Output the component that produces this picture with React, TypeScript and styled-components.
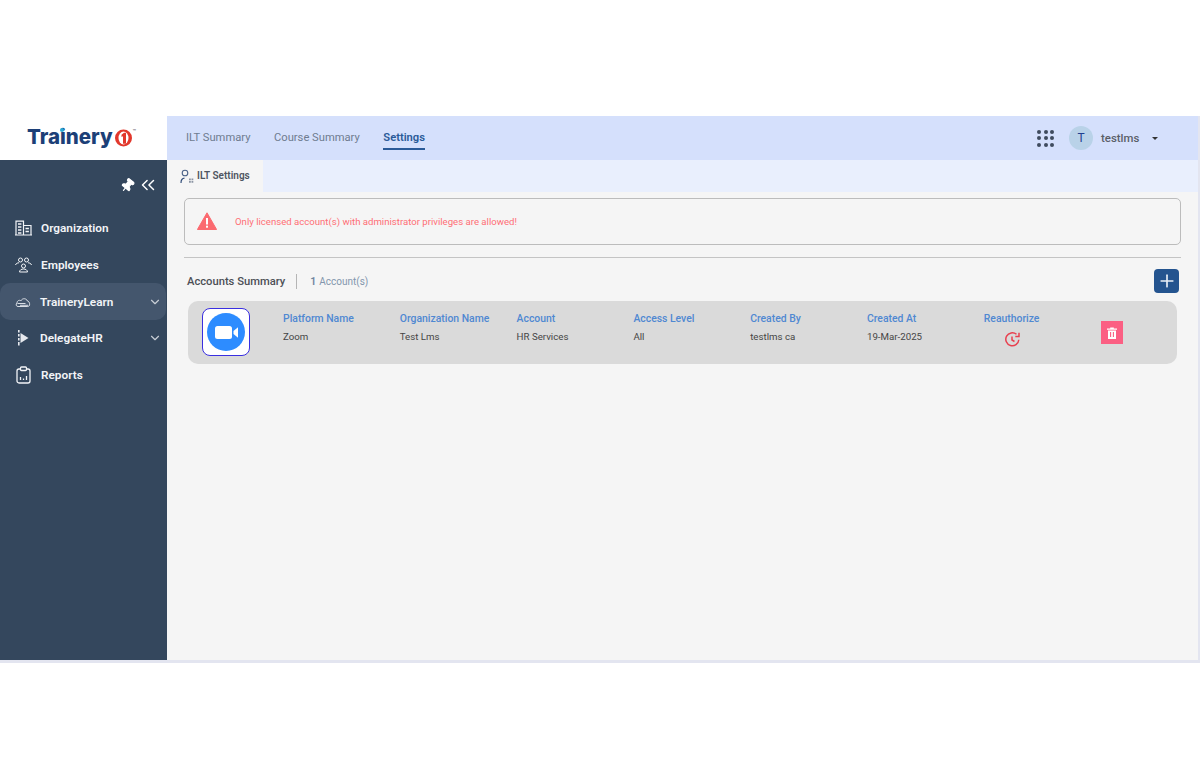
import React from "react";
import styled, { createGlobalStyle } from "styled-components";
import { ChevronDown, ChevronsLeft, Plus, Pin } from "lucide-react";

const GlobalStyle = createGlobalStyle`
  html, body {
    margin: 0;
    padding: 0;
    background: #fff;
    font-family: Roboto, "Liberation Sans", sans-serif;
  }
  * { box-sizing: border-box; }
`;

const Page = styled.div`
  width: 1200px;
  height: 780px;
  padding-top: 116px;
  overflow: hidden;
`;

const Frame = styled.div`
  width: 1200px;
  height: 547px;
  display: grid;
  grid-template-columns: 167px 1fr;
  border-bottom: 3px solid #e3e5f0;
  border-right: 2px solid #e3e5f0;
`;

const Side = styled.aside`
  display: flex;
  flex-direction: column;
  min-height: 0;
`;

const LogoBar = styled.div`
  height: 44px;
  background: #fff;
  display: flex;
  align-items: center;
  padding: 0 0 2px 27px;
`;

const LogoText = styled.span`
  position: relative;
  font-family: Inter, sans-serif;
  font-weight: 800;
  font-size: 20.5px;
  color: #1c3f77;
  line-height: 1;
`;

const LogoDot = styled.span`
  position: absolute;
  left: 33px;
  top: 1px;
  width: 4px;
  height: 4px;
  border-radius: 50%;
  background: #27a9d6;
`;

const LogoMark = styled.sup`
  font-size: 6px;
  line-height: 1;
  color: #555;
  margin: -12px 0 0 0;
`;

const Nav = styled.nav`
  flex: 1;
  background: #34475d;
  display: flex;
  flex-direction: column;
`;

const NavTools = styled.div`
  height: 50px;
  display: flex;
  align-items: center;
  justify-content: flex-end;
  gap: 2px;
  padding: 0 8px 0 0;
  color: #fff;
`;

const NavItem = styled.div<{ $active?: boolean }>`
  height: 36.7px;
  display: flex;
  align-items: center;
  padding-left: 15px;
  gap: 9px;
  color: #f2f4f7;
  font-size: 11.8px;
  font-weight: 600;
  background: ${(p) => (p.$active ? "#44566d" : "transparent")};
  border-radius: 10px;
  width: 166px;
`;

const NavLabel = styled.span`
  flex: 1;
`;

const NavArrow = styled.span`
  display: flex;
  margin-right: 4px;
  color: #c8ced6;
`;

const Main = styled.main`
  display: flex;
  flex-direction: column;
  background: #f5f5f5;
  min-height: 0;
`;

const TopBar = styled.header`
  height: 44px;
  background: #d5e0fc;
  display: flex;
  align-items: center;
  padding: 0 40px 0 19px;
`;

const TopTab = styled.div<{ $active?: boolean }>`
  height: 24px;
  margin-right: 23.5px;
  display: flex;
  align-items: center;
  font-size: 11.2px;
  font-weight: ${(p) => (p.$active ? 600 : 400)};
  color: ${(p) => (p.$active ? "#2a5a98" : "#6f7c90")};
  border-bottom: 2px solid ${(p) => (p.$active ? "#2a5a98" : "transparent")};
`;

const TopRight = styled.div`
  margin-left: auto;
  display: flex;
  align-items: center;
`;

const Dots = styled.div`
  display: grid;
  grid-template-columns: repeat(3, 4px);
  gap: 2.5px;
  margin-right: 15px;
`;

const Dot = styled.span`
  width: 4px;
  height: 4px;
  border-radius: 50%;
  background: #3f4b5e;
`;

const Avatar = styled.div`
  width: 24px;
  height: 24px;
  border-radius: 50%;
  background: #b9d2e8;
  color: #1f3f8f;
  font-size: 12px;
  display: flex;
  align-items: center;
  justify-content: center;
  margin-right: 8px;
`;

const UserName = styled.span`
  font-size: 11.4px;
  font-weight: 500;
  color: #5a5f68;
  margin-right: 11px;
  width: 40px;
`;

const Caret = styled.span`
  width: 0;
  height: 0;
  border-left: 3.5px solid transparent;
  border-right: 3.5px solid transparent;
  border-top: 3.5px solid #333;
`;

const SubBar = styled.div`
  height: 32px;
  background: #e9effd;
  display: flex;
`;

const SubTab = styled.div`
  width: 96px;
  background: #f5f5f5;
  display: flex;
  align-items: center;
  padding-left: 13px;
  gap: 3px;
  font-size: 10px;
  font-weight: 600;
  color: #4e5561;
  padding-bottom: 1px;
`;

const Content = styled.div`
  padding: 6px 17px 0 17px;
  display: flex;
  flex-direction: column;
`;

const Alert = styled.div`
  height: 47px;
  border: 1px solid #bcbcbc;
  border-radius: 5px;
  display: flex;
  align-items: center;
  padding: 0 0 1px 12px;
  gap: 18px;
  font-size: 9.6px;
  color: #ff6f76;
`;

const Rule = styled.div`
  height: 1px;
  background: #c4c4c4;
  margin-top: 12px;
`;

const SummaryHead = styled.div`
  height: 24px;
  margin-top: 11px;
  display: flex;
  align-items: center;
  padding-left: 3px;
`;

const SummaryTitle = styled.span`
  font-size: 11.2px;
  font-weight: 500;
  color: #4c4f55;
`;

const Divider = styled.span`
  width: 1px;
  height: 15px;
  background: #b5b5b5;
  margin: 0 13px 0 11px;
`;

const Count = styled.span`
  font-size: 10px;
  color: #8395ad;
`;

const CountNum = styled.b`
  font-weight: 600;
  color: #6f84a0;
  margin-right: 3px;
  font-size: 10.5px;
`;

const AddButton = styled.button`
  margin-left: auto;
  margin-right: 2px;
  width: 25px;
  height: 24px;
  border: none;
  border-radius: 4px;
  padding: 0;
  background: #24548f;
  color: #e8eef6;
  display: flex;
  align-items: center;
  justify-content: center;
`;

const AccountRow = styled.div`
  margin: 8px 4px 0 4px;
  height: 63px;
  background: #dadada;
  border-radius: 10px;
  display: grid;
  grid-template-columns: 95px repeat(7, 116.8px) 1fr;
  align-items: start;
`;

const LogoCell = styled.div`
  padding: 7px 0 0 14px;
  display: flex;
`;

const ZoomBox = styled.div`
  width: 48px;
  height: 48px;
  background: #fff;
  border: 1px solid #3a2fe0;
  border-radius: 8px;
  display: flex;
  align-items: center;
  justify-content: center;
`;

const Cell = styled.div`
  display: flex;
  flex-direction: column;
  gap: 7px;
  padding-top: 12px;
`;

const CellLabel = styled.span`
  font-size: 10.4px;
  font-weight: 500;
  line-height: 11px;
  color: #4f88d2;
  white-space: nowrap;
`;

const CellValue = styled.span`
  font-size: 9.7px;
  line-height: 11px;
  color: #454545;
  white-space: nowrap;
`;

const ReauthIcon = styled.span`
  display: flex;
  width: 57px;
  justify-content: center;
`;

const DeleteButton = styled.div`
  width: 22px;
  height: 23px;
  margin-top: 20px;
  background: #fb5f83;
  display: flex;
  align-items: center;
  justify-content: center;
`;

const OrgIcon = () => (
  <svg width="17" height="16" viewBox="0 0 17 16" fill="none" stroke="#f2f4f7" strokeWidth="1.2">
    <path d="M1 15V1.2h7.5V15M8.5 5.5h7.5V15M0 15h17" />
    <path d="M3 4h3.4M3 7h3.4M3 10h3.4M3 13h3.4M10.500 8.500h3.400M10.500 11.500h3.400" strokeWidth="1.500" />
  </svg>
);

const PeopleIcon = () => (
  <svg width="17" height="16" viewBox="0 0 17 16" fill="none" stroke="#f2f4f7" strokeWidth="1">
    <circle cx="5.500" cy="3" r="2" />
    <circle cx="11.500" cy="3" r="2" />
    <circle cx="8.500" cy="9" r="2" />
    <path d="M4.500 15c0-4 8-4 8 0zM.5 8c.5-1.600 2-2.200 3.500-2.200M16.500 8c-.5-1.600-2-2.200-3.500-2.200" />
  </svg>
);

const CloudIcon = () => (
  <svg width="16" height="12" viewBox="0 0 16 12" fill="none" stroke="#d8dde4" strokeWidth="1">
    <path d="M3 10.500C1 10.500.6 8.200 2 7c.2-2.800 2.600-3.200 4-2.200C7 2 11.500 2 12.400 5c2.600.2 3.200 5.500.4 5.500z" />
    <path d="M2.500 7.500h8M5 9.300h8" />
  </svg>
);

const DelegateIcon = () => (
  <svg width="16" height="18" viewBox="0 0 16 18" fill="#e6e9ee">
    <path d="M5.500 4 13.500 9l-8 5z" />
    <rect x="3" y="1" width="1.600" height="2.500" />
    <rect x="3" y="5" width="1.600" height="2.500" />
    <rect x="3" y="9" width="1.600" height="2.500" />
    <rect x="3" y="13" width="1.600" height="3.500" />
  </svg>
);

const ReportIcon = () => (
  <svg width="17" height="18" viewBox="0 0 17 18" fill="none" stroke="#f2f4f7" strokeWidth="1.300">
    <rect x="2" y="3" width="13" height="14" rx="2" />
    <rect x="5.500" y="1" width="6" height="3.500" rx="1" fill="#34475d" />
    <path d="M5.500 14v-3M8.500 14v-1.500M11.500 14v-4" />
  </svg>
);

const UserTabIcon = () => (
  <svg width="14" height="16" viewBox="0 0 14 16" fill="none">
    <circle cx="5" cy="5" r="2.800" stroke="#4a6288" strokeWidth="1.100" />
    <path d="M1 15c0-3 1.500-4.700 3.500-4.800" stroke="#34507c" strokeWidth="1.200" />
    <path d="M9 10.500h1.800v1.800H9zM11.500 10.500h1.800v1.800h-1.800zM9 13h1.800v1.800H9zM11.500 13h1.800v1.800h-1.800z" fill="#8b94a3" />
  </svg>
);

const WarnIcon = () => (
  <svg width="20" height="18" viewBox="0 0 20 18">
    <path d="M10 .8 19.600 17.500H.4z" fill="#fb6a70" stroke="#fb6a70" strokeLinejoin="round" />
    <rect x="9" y="6" width="2" height="6.500" fill="#fff" />
    <rect x="9" y="13.700" width="2" height="2" fill="#fff" />
  </svg>
);

const ZoomLogo = () => (
  <svg width="38" height="38" viewBox="0 0 38 38">
    <circle cx="19" cy="19" r="19" fill="#2d8cff" />
    <rect x="8" y="13" width="17" height="13" rx="2.500" fill="#fff" />
    <path d="M26.500 18 31 14.200v10.600L26.500 21z" fill="#fff" />
  </svg>
);

const LogoOne = () => (
  <svg width="19" height="19" viewBox="0 0 19 19" style={{ marginLeft: 1 }}>
    <ellipse cx="9.500" cy="10" rx="8.500" ry="8.500" fill="#e2382c" />
    <ellipse cx="9.500" cy="10" rx="5" ry="6.500" fill="#fff" />
    <path d="M7.500 6.800 10 4.800h2v11H9V8.200l-1.500.8z" fill="#e2382c" />
  </svg>
);

const ReauthGlyph = () => (
  <svg width="17" height="17" viewBox="0 0 17 17" fill="none" stroke="#e8404f" strokeWidth="1.500">
    <path d="M14.800 8.800A6.500 6.500 0 1 1 12.500 3.300" />
    <path d="M15 1.800v3.700h-3.700" />
    <path d="M8 5.500v3.500l2.500 1.500" />
  </svg>
);

const TrashGlyph = () => (
  <svg width="10" height="12" viewBox="0 0 10 12">
    <path d="M0 1.500h3.200V.5h3.600v1H10v1.200H0zM1 3.400h8V12H1z" fill="#fff" />
    <path d="M3.600 5v5M6.400 5v5" stroke="#fb5f83" strokeWidth="1.100" />
  </svg>
);

const columns = [
  ["Platform Name", "Zoom"],
  ["Organization Name", "Test Lms"],
  ["Account", "HR Services"],
  ["Access Level", "All"],
  ["Created By", "testlms ca"],
  ["Created At", "19-Mar-2025"],
];

const App: React.FC = () => {
  return (
    <Page>
      <GlobalStyle />
      <Frame>
        <Side>
          <LogoBar>
            <LogoText>
              Trainery
              <LogoDot />
            </LogoText>
            <LogoOne />
            <LogoMark>™</LogoMark>
          </LogoBar>
          <Nav>
            <NavTools>
              <Pin size={15} fill="#fff" style={{ transform: "rotate(40deg)" }} />
              <ChevronsLeft size={22} strokeWidth={1.6} />
            </NavTools>
            <NavItem>
              <OrgIcon />
              <NavLabel>Organization</NavLabel>
            </NavItem>
            <NavItem>
              <PeopleIcon />
              <NavLabel>Employees</NavLabel>
            </NavItem>
            <NavItem $active>
              <CloudIcon />
              <NavLabel>TraineryLearn</NavLabel>
              <NavArrow>
                <ChevronDown size={14} />
              </NavArrow>
            </NavItem>
            <NavItem>
              <DelegateIcon />
              <NavLabel>DelegateHR</NavLabel>
              <NavArrow>
                <ChevronDown size={14} />
              </NavArrow>
            </NavItem>
            <NavItem>
              <ReportIcon />
              <NavLabel>Reports</NavLabel>
            </NavItem>
          </Nav>
        </Side>
        <Main>
          <TopBar>
            <TopTab>ILT Summary</TopTab>
            <TopTab>Course Summary</TopTab>
            <TopTab $active>Settings</TopTab>
            <TopRight>
              <Dots>
                {Array.from({ length: 9 }).map((_, i) => (
                  <Dot key={i} />
                ))}
              </Dots>
              <Avatar>T</Avatar>
              <UserName>testlms</UserName>
              <Caret />
            </TopRight>
          </TopBar>
          <SubBar>
            <SubTab>
              <UserTabIcon />
              ILT Settings
            </SubTab>
          </SubBar>
          <Content>
            <Alert>
              <WarnIcon />
              Only licensed account(s) with administrator privileges are allowed!
            </Alert>
            <Rule />
            <SummaryHead>
              <SummaryTitle>Accounts Summary</SummaryTitle>
              <Divider />
              <Count>
                <CountNum>1</CountNum>Account(s)
              </Count>
              <AddButton>
                <Plus size={20} />
              </AddButton>
            </SummaryHead>
            <AccountRow>
              <LogoCell>
                <ZoomBox>
                  <ZoomLogo />
                </ZoomBox>
              </LogoCell>
              {columns.map(([label, value]) => (
                <Cell key={label}>
                  <CellLabel>{label}</CellLabel>
                  <CellValue>{value}</CellValue>
                </Cell>
              ))}
              <Cell>
                <CellLabel>Reauthorize</CellLabel>
                <ReauthIcon>
                  <ReauthGlyph />
                </ReauthIcon>
              </Cell>
              <DeleteButton>
                <TrashGlyph />
              </DeleteButton>
            </AccountRow>
          </Content>
        </Main>
      </Frame>
    </Page>
  );
};

export default App;
